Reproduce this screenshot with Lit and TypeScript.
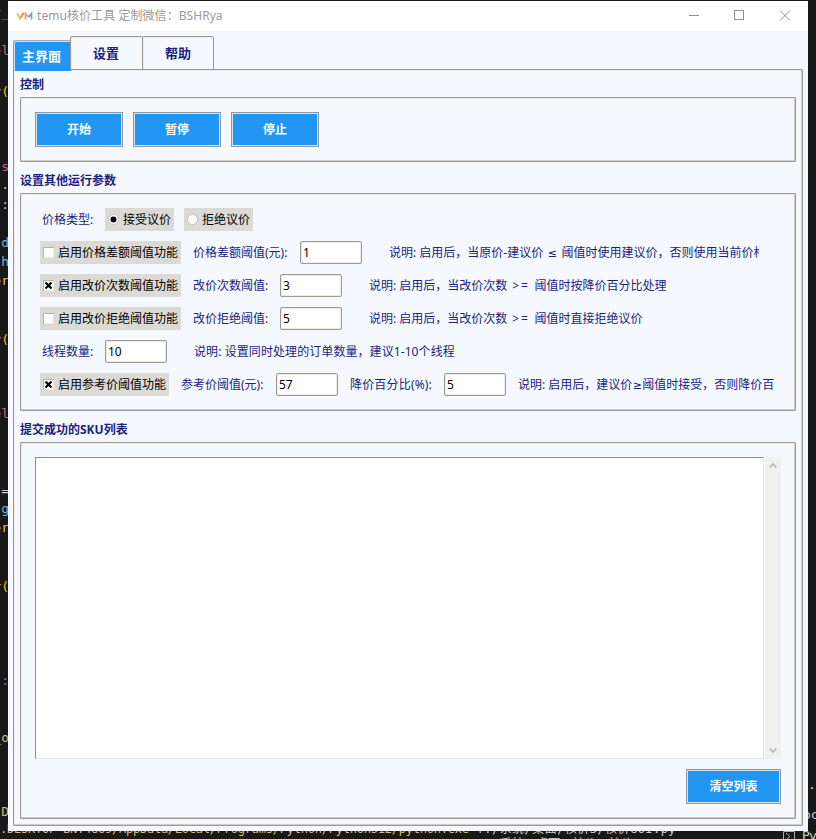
import { LitElement, html, css, svg } from "lit";
import { customElement, property, state } from "lit/decorators.js";
import { classMap } from "lit/directives/class-map.js";

const codeBits: Array<[number, string, string]> = [
  [5, "r_", "grey"], [43, "el", "rose"], [84, "r(", "gold"], [159, "s", "rose"],
  [177, ".", "cream"], [197, ":", "plain"], [235, "d", "blue"], [254, "h", "blue"],
  [273, "er", "cream"], [332, "r(", "gold"], [406, "el", "rose"], [483, "=", "plain"],
  [501, "g", "blue"], [520, "er", "cream"], [579, "r(", "gold"], [673, ":", "rose"],
  [730, "_o", "amber"], [804, ".D", "amber"],
];

@customElement("tk-check")
class TkCheck extends LitElement {
  static styles = css`
    :host { display: block; height: 23px; background: #dcdad5; color: #000; cursor: default; }
    .row { display: flex; align-items: center; height: 23px; white-space: nowrap; }
    .mark { display: block; margin: 0 4px 0 3px; width: 11px; height: 11px; flex: none; }
    .text { line-height: 23px; }
  `;
  @property() label = "";
  @property({ type: Boolean }) checked = false;
  @property({ type: Boolean }) radio = false;
  render() {
    const mark = this.radio
      ? svg`<circle cx="5.5" cy="5.5" r="5" fill="#fff" stroke="#c3c1bb"/>${this.checked ? svg`<circle cx="5.5" cy="5.5" r="3" fill="#000"/>` : ""}`
      : svg`<rect x=".5" y=".5" width="10" height="10" fill="#fff" stroke="#b4b2ab"/><path d="M1 10.5H10.5V1" fill="none" stroke="#eeebe7"/>${this.checked ? svg`<path d="M2.500 2.500L8.500 8.500M8.500 2.500L2.500 8.500" stroke="#000" stroke-width="2.2"/>` : ""}`;
    return html`<div class="row" @click=${() => (this.checked = this.radio || !this.checked)}>
      <svg class="mark" viewBox="0 0 11 11">${mark}</svg><span class="text">${this.label}</span>
    </div>`;
  }
}

@customElement("app-root")
class AppRoot extends LitElement {
  static styles = css`
    :host {
      display: block; position: relative; width: 816px; height: 839px; overflow: hidden;
      background: #181818; color: #1a237e;
      font: 12px/16px "Noto Sans", "Noto Sans CJK SC", sans-serif;
    }
    * { box-sizing: border-box; }
    .editor { position: absolute; inset: 0; font: 13px/16px "DejaVu Sans Mono", "Noto Sans CJK SC", monospace; white-space: pre; }
    .bit { position: absolute; left: 0; width: 9px; display: flex; justify-content: flex-end; }
    .grey { color: #777; } .rose { color: #b8697a; } .gold { color: #e8c520; }
    .cream { color: #c8c39a; } .plain { color: #ccc; } .blue { color: #7ab0dc; } .amber { color: #dcb86c; }
    .terminal { position: absolute; left: 0; top: 821px; display: flex; gap: 8px; font-size: 12px; letter-spacing: -0.23px; }
    .terminal .plain { letter-spacing: 0.45px; }
    .second { position: absolute; left: 500px; top: 836px; color: #bbb; word-spacing: 5px; font-size: 12px; }
    .right { position: absolute; color: #ccc; }
    .dot { left: 808px; top: 777px; } .oc { left: 803px; top: 807px; } .py { left: 802px; top: 828px; letter-spacing: -0.8px; }
    .shell { position: absolute; left: 783px; top: 831px; width: 12px; height: 8px; fill: none; stroke: #aaa; }

    .window { position: absolute; left: 8px; top: 1px; width: 800px; height: 830px; background: #f5f9ff; display: flex; flex-direction: column; }
    .title { height: 30px; background: #fff; color: #999; display: flex; align-items: center; padding-left: 8px; flex: none; }
    .logo { width: 17px; height: 10px; margin-right: 4px; fill: none; stroke-width: 1.7; }
    .name { flex: 1; white-space: nowrap; letter-spacing: 0.06px; }
    .controls { width: 130px; height: 30px; fill: none; stroke: #909090; }
    .tabs { display: flex; align-items: flex-start; height: 38px; padding: 5px 0 0 5px; position: relative; z-index: 1; }
    .tab { height: 34px; border: 1px solid #9e9a91; border-radius: 2px 2px 0 0; font-weight: bold; font-size: 13px; line-height: 33px; text-align: center; box-shadow: inset 1px 1px #eeebe7; }
    .tab.one { width: 58px; height: 31px; margin-top: 4px; border-width: 1px 0 0 1px; border-top-color: #a3aeb6; line-height: 30px; padding-right: 2px; }
    .tab.two { width: 73px; padding-right: 1px; margin-left: -1px; } .tab.three { width: 72px; margin-left: -1px; }
    .tab.active { background: #2196f3; color: #fff; box-shadow: inset 1px 1px #c9e0f2; }
    .pane, .group { border: 1px solid #9e9a91; border-radius: 1px; box-shadow: inset -1px -1px #cfcdc8, inset 1px 1px #eeebe7; }
    .pane { width: 790px; height: 757px; margin-left: 5px; padding: 7px 6px 6px; display: flex; flex-direction: column; }
    h2 { margin: 0; height: 16px; font-size: 12px; line-height: 16px; font-weight: bold; }
    .group { width: 776px; }
    .actions { height: 65px; display: flex; gap: 10px; padding: 14px; margin: 4px 0 11px; }
    button {
      width: 88px; height: 35px; padding: 0; border: 1px solid #8d989f; box-shadow: inset 0 0 0 1px #dce3e6; background: #2196f3;
      color: #fff; font: bold 12px/31px "Noto Sans", "Noto Sans CJK SC", sans-serif;
    }
    .params { height: 218px; display: flex; flex-direction: column; gap: 10px; padding: 14px 0 0 19px; margin: 4px 0 11px; }
    .line { display: flex; height: 23px; line-height: 23px; white-space: nowrap; }
    .lead { width: 63px; margin-left: 2px; }
    .choice { width: 69px; margin-right: 10px; }
    .wide { width: 141px; margin-right: 12px; } .mid { width: 129px; margin-right: 12px; }
    .w107 { width: 107px; } .w87 { width: 87px; } .w95 { width: 95px; } .w94 { width: 94px; letter-spacing: 0.18px; }
    input {
      width: 62px; height: 23px; border: 1px solid #9e9a91; border-radius: 2px; padding: 0 2px; outline: none;
      background: #fff; box-shadow: inset 0 0 0 1px #eeebe7; color: #000; font: inherit;
    }
    .note { margin-left: 27px; overflow: hidden; } .clip { width: 370px; } .near { margin-left: 12px; }
    .threads { letter-spacing: 0.08px; }
    .ge { letter-spacing: 1.8px; }
    .sign { font-family: "DejaVu Sans"; display: inline-block; width: 10px; font-size: 11px; text-align: center; }
    .clip .sign { width: 12px; }
    .list { height: 377px; padding: 14px; display: flex; flex-direction: column; align-items: flex-end; gap: 10px; margin-top: 4px; }
    .box { display: flex; gap: 1px; height: 302px; width: 746px; }
    .area { width: 729px; background: #fff; border: 1px solid #e3e3e3; border-top-color: #8c8c8c; border-left-color: #8c8c8c; }
    .scroll { width: 16px; background: #f0f0f0; display: flex; flex-direction: column; justify-content: space-between; align-items: center; padding: 5px 0; }
    .arrow { width: 8px; height: 7px; fill: none; stroke: #b5b5b5; stroke-width: 1.8; }
    .clear { width: 95px; }
  `;

  @state() private tab = 0;

  private field(value: string) {
    return html`<input .value=${value} />`;
  }

  render() {
    return html`
      <div class="editor">
        ${codeBits.map(([y, t, c]) => html`<span class="bit ${c}" style="top:${y}px">${t}</span>`)}
        <div class="terminal"><span class="amber">.DESKTOP-BNT4869/AppData/Local/Programs/Python/Python312/python.exe</span><span class="plain">f:/系统/桌面/核价3/核价GUI.py</span></div>
        <span class="second">系统 桌面 核价 核价</span>
        <span class="right dot">.</span><span class="right oc">oc</span><span class="right py">Py</span>
        <svg class="shell"><path d="M.5 8V.5H11.5V8M3 2L7 5.500L3 9" /></svg>
      </div>
      <div class="window">
        <div class="title">
          <svg class="logo" viewBox="0 0 17 10">
            <path d="M1 2L4 7.500L7.500 2" stroke="#e8c25a" /><path d="M4.500 7L7.500 2" stroke="#ef8a54" />
            <path d="M9.500 8.500V2.500L12.500 6" stroke="#ed995c" /><path d="M12.500 6L15.500 2.500V8.500" stroke="#55abd0" />
          </svg>
          <span class="name">temu核价工具 定制微信：BSHRya</span>
          <svg class="controls" viewBox="0 0 130 30"><path d="M11 14.500H21M56.500 9.500H65.500V18.500H56.500Z" shape-rendering="crispEdges" /><path d="M102 9.500L112 19.500M112 9.500L102 19.500" /></svg>
        </div>
        <div class="tabs">
          ${["主界面", "设置", "帮助"].map((t, i) => html`<div class=${classMap({ tab: true, one: i === 0, two: i === 1, three: i === 2, active: this.tab === i })} @click=${() => (this.tab = i)}>${t}</div>`)}
        </div>
        <div class="pane">
          <h2>控制</h2>
          <div class="group actions"><button>开始</button><button>暂停</button><button>停止</button></div>
          <h2>设置其他运行参数</h2>
          <div class="group params">
            <div class="line"><span class="lead">价格类型:</span><tk-check class="choice" radio checked label="接受议价"></tk-check><tk-check class="choice" radio label="拒绝议价"></tk-check></div>
            <div class="line"><tk-check class="wide" label="启用价格差额阈值功能"></tk-check><span class="w107">价格差额阈值(元):</span>${this.field("1")}<span class="note clip">说明: 启用后，当原价-建议价 <span class="sign">≤</span> 阈值时使用建议价，否则使用当前价格</span></div>
            <div class="line"><tk-check class="wide" checked label="启用改价次数阈值功能"></tk-check><span class="w87">改价次数阈值:</span>${this.field("3")}<span class="note">说明: 启用后，当改价次数<span class="ge"> &gt;= </span>阈值时按降价百分比处理</span></div>
            <div class="line"><tk-check class="wide" label="启用改价拒绝阈值功能"></tk-check><span class="w87">改价拒绝阈值:</span>${this.field("5")}<span class="note">说明: 启用后，当改价次数<span class="ge"> &gt;= </span>阈值时直接拒绝议价</span></div>
            <div class="line"><span class="lead">线程数量:</span>${this.field("10")}<span class="note threads">说明: 设置同时处理的订单数量，建议1-10个线程</span></div>
            <div class="line"><tk-check class="mid" checked label="启用参考价阈值功能"></tk-check><span class="w95">参考价阈值(元):</span>${this.field("57")}<span class="near w94">降价百分比(%):</span>${this.field("5")}<span class="near">说明: 启用后，建议价<span class="sign">≥</span>阈值时接受，否则降价百</span></div>
          </div>
          <h2>提交成功的SKU列表</h2>
          <div class="group list">
            <div class="box">
              <div class="area"></div>
              <div class="scroll">
                <svg class="arrow" viewBox="0 0 8 7"><path d="M.7 5.500L4 2L7.300 5.500" /></svg>
                <svg class="arrow" viewBox="0 0 8 7"><path d="M.7 1.500L4 5L7.300 1.500" /></svg>
              </div>
            </div>
            <button class="clear">清空列表</button>
          </div>
        </div>
      </div>`;
  }
}
